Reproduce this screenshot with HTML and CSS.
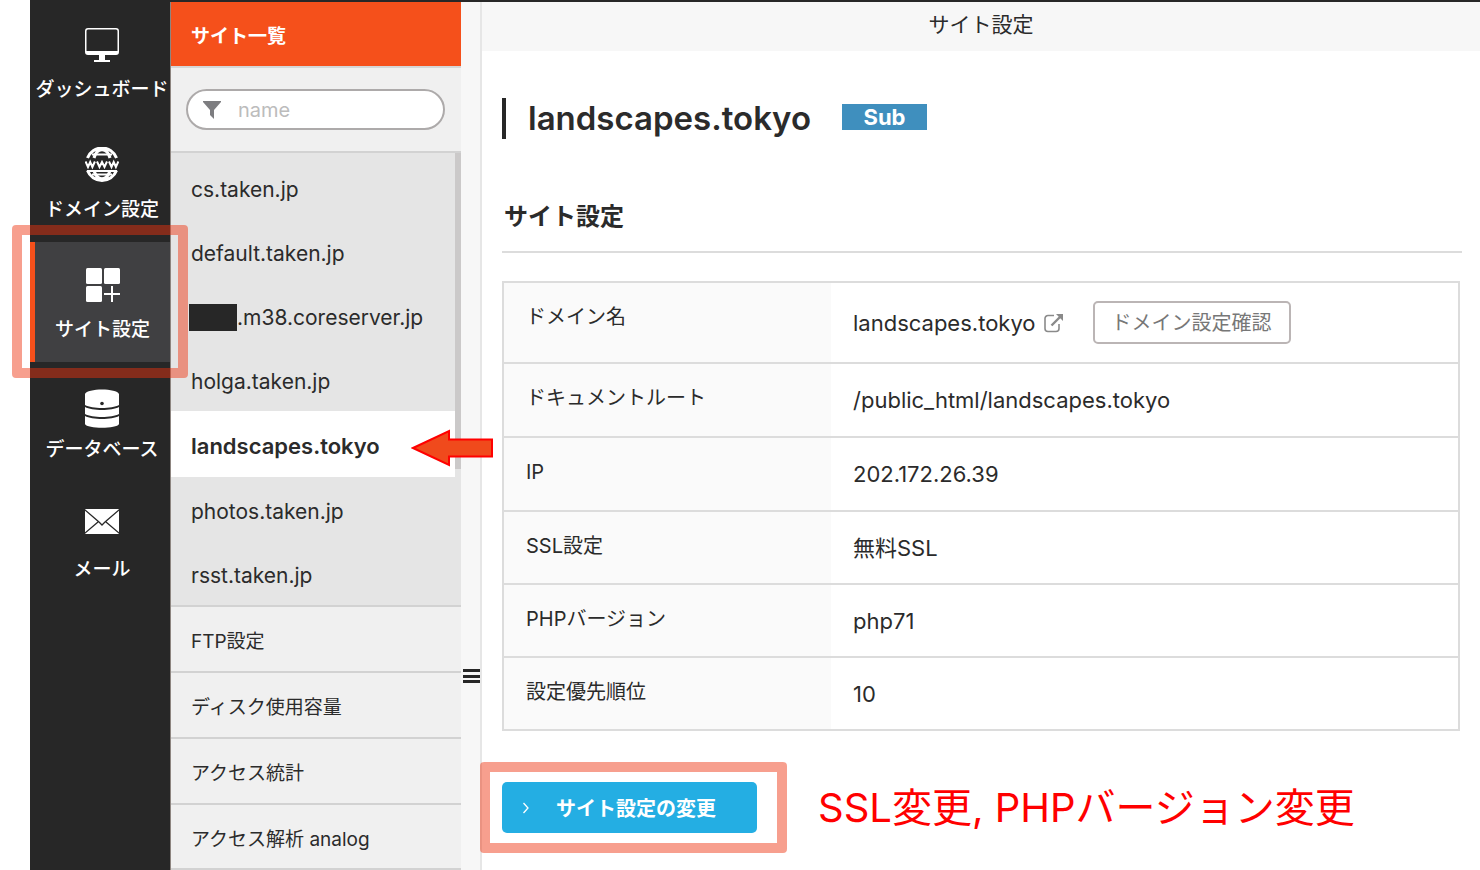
FILE: index.html
```html
<!DOCTYPE html>
<html lang="ja">
<head>
<meta charset="utf-8">
<title>サイト設定</title>
<link rel="stylesheet" href="styles.css">
</head>
<body>
<div class="shell">
  <nav class="nav">
    <a class="nav-item" href="#">
      <svg class="nav-icon" width="34" height="36" viewBox="0 0 34 36"><path fill="#fff" fill-rule="evenodd" d="M3 1h28a3 3 0 0 1 3 3v21a3 3 0 0 1-3 3H20v5h5v2H9v-2h5v-5H3a3 3 0 0 1-3-3V4a3 3 0 0 1 3-3zm0 1.500a1.500 1.500 0 0 0-1.500 1.500v20h31V4A1.500 1.500 0 0 0 31 2.500z"/></svg>
      <span>ダッシュボード</span>
    </a>
    <a class="nav-item" href="#">
      <svg class="nav-icon" width="34" height="36" viewBox="0 0 34 36" fill="none" stroke="#fff"><path stroke-width="3" d="M2.500 11A15.500 15.500 0 0 1 31.500 11M2.500 23.500A15.500 15.500 0 0 0 31.500 23.500M9 11C12 0 22 0 25 11M9 23.500C12 34.500 22 34.500 25 23.500"/><path stroke-width="2" d="M7 7.500h20M2 24h30M7 27.500h20"/><path stroke-width="2" d="M0.500 14.500l2.500 5.500 2.200-5 2.200 5 2.500-5.500M12 14.500l2.500 5.500 2.500-5 2.500 5 2.500-5.500M24 14.500l2.500 5.500 2.200-5 2.200 5 2.500-5.500"/></svg>
      <span>ドメイン設定</span>
    </a>
    <a class="nav-item nav-active" href="#">
      <svg class="nav-icon" width="34" height="36" viewBox="0 0 34 36" fill="#fff"><rect y="1" width="16" height="16" rx="1.500"/><rect x="18" y="1" width="16" height="16" rx="1.500"/><rect y="19" width="16" height="16" rx="1.500"/><path d="M25 19h2v7h7v2h-7v7h-2v-7h-7v-2h7z"/></svg>
      <span>サイト設定</span>
      <i class="frame frame-nav"></i>
    </a>
    <a class="nav-item" href="#">
      <svg class="nav-icon" width="34" height="36" viewBox="0 0 34 36" overflow="visible" fill="#fff"><path d="M0 7C2 1 32 1 34 7V18C27 22 7 22 0 18zM0 20C7 24 27 24 34 20V27C27 31 7 31 0 27zM0 29C7 33 27 33 34 29V37C32 42 2 42 0 37z"/><circle cx="17" cy="16.500" r="1.800" fill="#272727"/></svg>
      <span>データベース</span>
    </a>
    <a class="nav-item" href="#">
      <svg class="nav-icon" width="34" height="36" viewBox="0 0 34 36"><rect y="2" width="34" height="25" rx="1" fill="#fff"/><path d="M0 3l14 12 3 3 3-3L34 3M0 26l13-11M34 26L21 15" fill="none" stroke="#272727" stroke-width="1.300"/></svg>
      <span>メール</span>
    </a>
  </nav>

  <aside class="side">
    <h2 class="side-title">サイト一覧</h2>
    <div class="search">
      <label class="search-box">
        <svg width="18" height="18" viewBox="0 0 18 18"><path fill="#7d7d80" d="M0 0h18v1l-7 8v9l-4-4V9L0 1z"/></svg>
        <input type="text" placeholder="name" aria-label="name">
      </label>
    </div>
    <div class="sites">
      <a class="site" href="#">cs.taken.jp</a>
      <a class="site" href="#">default.taken.jp</a>
      <a class="site" href="#"><span class="mask"></span>.m38.coreserver.jp</a>
      <a class="site" href="#">holga.taken.jp</a>
      <a class="site site-active" href="#">landscapes.tokyo
        <svg class="arrow" width="82" height="38" viewBox="0 0 82 38"><path d="M2 19L38 2v8.500h43v17H38V36z" fill="#f04a1c" stroke="#f00" stroke-width="2"/></svg>
      </a>
      <a class="site" href="#">photos.taken.jp</a>
      <a class="site" href="#">rsst.taken.jp</a>
      <i class="scrollbar"></i>
    </div>
    <a class="link" href="#">FTP設定</a>
    <a class="link" href="#">ディスク使用容量</a>
    <a class="link" href="#">アクセス統計</a>
    <a class="link" href="#">アクセス解析 analog</a>
  </aside>

  <div class="gutter"><i class="grip"></i></div>

  <main class="main">
    <header class="topbar">サイト設定</header>
    <div class="content">
      <div class="title-row">
        <h1 class="title">landscapes.tokyo</h1>
        <span class="badge">Sub</span>
      </div>
      <h2 class="section">サイト設定</h2>
      <table class="info">
        <tr><th scope="row">ドメイン名</th><td><div class="domain"><a class="ext" href="#">landscapes.tokyo<svg width="20" height="20" viewBox="0 0 20 20" fill="none" stroke="#8a8a8a" stroke-width="1.600"><path d="M10 2.500H4A3 3 0 0 0 1 5.500V15.500A3 3 0 0 0 4 18.500H12A3 3 0 0 0 15 15.500V11"/><path d="M7.500 12.500L16 4" stroke-width="2.400"/><path d="M12 1h7v7z" fill="#8a8a8a" stroke="none"/></svg></a><button class="outline" type="button">ドメイン設定確認</button></div></td></tr>
        <tr><th scope="row">ドキュメントルート</th><td>/public_html/landscapes.tokyo</td></tr>
        <tr><th scope="row">IP</th><td>202.172.26.39</td></tr>
        <tr><th scope="row">SSL設定</th><td>無料SSL</td></tr>
        <tr><th scope="row">PHPバージョン</th><td>php71</td></tr>
        <tr><th scope="row">設定優先順位</th><td>10</td></tr>
      </table>
      <div class="actions">
        <div class="framed">
          <button class="primary" type="button"><svg width="8" height="12" viewBox="0 0 8 12"><path d="M1.500 1l4.500 5-4.500 5" fill="none" stroke="#fff" stroke-width="1.300"/></svg>サイト設定の変更</button>
          <i class="frame frame-button"></i>
        </div>
        <p class="note">SSL変更, PHPバージョン変更</p>
      </div>
    </div>
  </main>
</div>
</body>
</html>
```

FILE: styles.css
```css
* { box-sizing: border-box; }
body {
  margin: 0;
  background: #fff;
  color: #2b2b2b;
  font-family: Inter, "Noto Sans CJK JP", sans-serif;
  font-size: 20px;
}
a { color: inherit; text-decoration: none; }
h1, h2, p { margin: 0; }
button, input { font: inherit; }

.shell {
  display: flex;
  min-height: 100vh;
  margin-left: 30px;
  border-top: 2px solid #272727;
}

/* Primary navigation */
.nav { flex: 0 0 141px; background: #272727; border-right: 1px solid #8d8580; }
.nav-item {
  position: relative;
  display: flex;
  flex-direction: column;
  align-items: center;
  gap: 13px;
  height: 120px;
  padding: 25px 0 0 4px;
  color: #fff;
  font-size: 19px;
  font-weight: 500;
  line-height: 28px;
  white-space: nowrap;
}
.nav-icon { flex: none; }
.nav-active { background: #404042; border-left: 5px solid #f5501b; padding-left: 0; }

/* Marker frames */
.frame {
  position: absolute;
  z-index: 2;
  border: 10px solid rgba(239, 51, 15, .47);
  border-radius: 4px;
  pointer-events: none;
}
.frame-nav { inset: -17px -18px -16px -23px; }
.frame-button { inset: -20px -30px -20px -22px; }

/* Site list */
.side { flex: 0 0 290px; min-width: 0; background: #f0f0f0; }
.side-title {
  height: 66px;
  padding-left: 20px;
  border-bottom: 2px solid #d6d6d6;
  background: #f5501b;
  color: #fff;
  font-size: 19px;
  font-weight: 700;
  line-height: 70px;
}
.search { padding: 21px 16px 21px 15px; }
.search-box {
  display: flex;
  align-items: center;
  gap: 17px;
  height: 41px;
  padding: 0 15px;
  border: 2px solid #adaaaa;
  border-radius: 21px;
  background: #fff;
}
.search-box svg { flex: none; }
.search-box input { flex: 1; width: 100%; min-width: 0; padding: 0; border: 0; outline: 0; background: none; font-size: 20px; }
.search-box input::placeholder { color: #bcbcbc; }
.sites {
  position: relative;
  padding: 2px 6px 0 0;
  border-top: 2px solid #d2d2d2;
  border-bottom: 2px solid #d2d2d2;
  background: #e5e5e5;
}
.site {
  position: relative;
  display: flex;
  align-items: center;
  height: 64px;
  padding: 4px 0 0 20px;
  font-size: 21px;
}
.site-active { height: 66px; background: #fff; font-size: 22px; font-weight: 600; }
.mask { width: 48px; height: 27px; margin-left: -2px; background: #272727; }
.arrow { position: absolute; z-index: 2; left: 240px; top: 18px; }
.scrollbar { position: absolute; top: 0; right: 0; width: 6px; height: 316px; background: #cbc9c9; }
.link {
  display: block;
  height: 66px;
  padding-left: 20px;
  border-bottom: 2px solid #d2d2d2;
  font-size: 19px;
  line-height: 70px;
  overflow: hidden;
}
.link:last-child { height: 65px; }

/* Drag handle */
.gutter { flex: 0 0 21px; padding: 667px 0 0 2px; background: #f7f7f7; border-right: 2px solid #e6e6e6; }
.grip {
  display: block;
  width: 17px;
  height: 14px;
  background: linear-gradient(#272727, #272727) 0 0 / 17px 3px no-repeat,
    linear-gradient(#272727, #272727) 0 50% / 17px 3px no-repeat,
    linear-gradient(#272727, #272727) 0 100% / 17px 3px no-repeat;
}

/* Main area */
.main { flex: 1; min-width: 0; }
.topbar { height: 49px; background: #f7f7f7; font-size: 21px; line-height: 45px; text-align: center; }
.content { padding: 47px 18px 0 20px; }
.title-row { display: flex; align-items: center; gap: 31px; }
.title { padding-left: 22px; border-left: 4px solid #272727; font-size: 33px; font-weight: 600; line-height: 41px; }
.badge { width: 85px; margin-bottom: 4px; background: #3f8fbe; color: #fff; font-size: 22px; font-weight: 700; line-height: 26px; text-align: center; }
.section {
  margin-top: 60px;
  padding: 0 0 16px 2px;
  border-bottom: 2px solid #dcdcdc;
  font-size: 24px;
  font-weight: 700;
  line-height: 36px;
}
.info { width: calc(100% - 2px); margin-top: 28px; border-collapse: collapse; border: 2px solid #dcdcdc; }
.info tr { border-bottom: 2px solid #dcdcdc; }
.info th {
  width: 328px;
  padding: 18px 22px;
  background: #fafafa;
  font-weight: 400;
  line-height: 32px;
  text-align: left;
  vertical-align: top;
}
.info td { height: 74px; padding: 0 22px; font-size: 22px; line-height: 32px; }
.info tr:first-child td { height: 81px; }
.info tr:nth-child(n+4) td { height: 73px; }
.domain { display: flex; align-items: center; gap: 29px; }
.ext { display: flex; align-items: center; gap: 8px; }
.outline {
  height: 43px;
  padding: 0 17px;
  border: 2px solid #bbb5b5;
  border-radius: 5px;
  background: #fff;
  color: #777;
  font-size: 20px;
}
.actions { display: flex; align-items: center; gap: 61px; margin-top: 51px; }
.framed { position: relative; }
.primary {
  display: flex;
  align-items: center;
  gap: 26px;
  width: 255px;
  height: 51px;
  padding: 0 20px;
  border: 0;
  border-radius: 5px;
  background: #24aee3;
  color: #fff;
  font-size: 20px;
  font-weight: 700;
}
.note { color: #f00; font-size: 40px; line-height: 50px; white-space: nowrap; }
```
